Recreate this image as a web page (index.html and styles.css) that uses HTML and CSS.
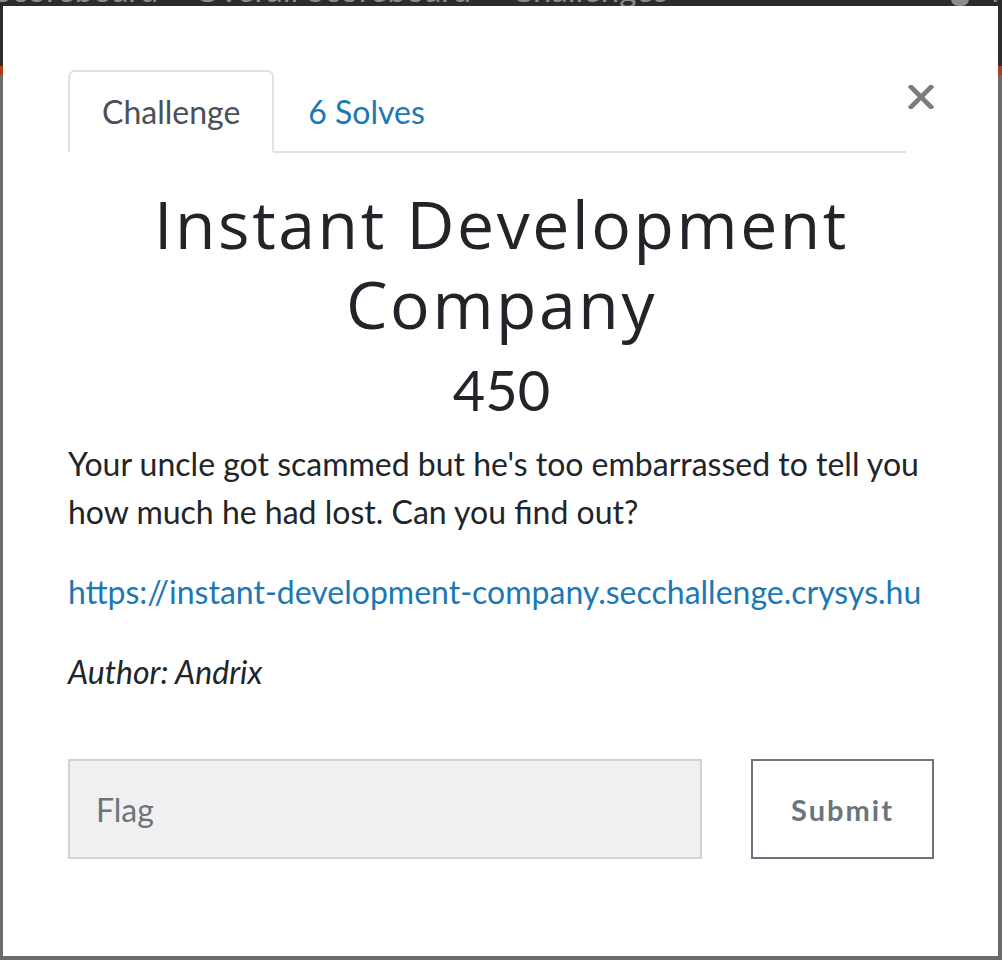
FILE: index.html
```html
<!DOCTYPE html>
<html lang="en">
<head>
<meta charset="utf-8">
<title>Instant Development Company</title>
<link rel="stylesheet" href="styles.css">
</head>
<body>
<div class="backdrop">
  <nav class="navbar">
    <span class="nav-item">Scoreboard</span>
    <span class="nav-item">Overall Scoreboard</span>
    <span class="nav-item">Challenges</span>
    <span class="nav-icon"></span>
    <span class="nav-user">N</span>
  </nav>
  <div class="navbar-stripe"></div>
  <div class="page-shade"></div>
</div>

<div class="modal">
  <div class="modal-body">
    <div class="tab-row">
      <ul class="nav-tabs">
        <li class="tab active">Challenge</li>
        <li class="tab"><a href="#" class="tab-link">6 Solves</a></li>
      </ul>
      <button class="close" aria-label="Close">
        <svg width="26" height="24" viewBox="0 0 26 24"><path d="M3 2 L23 22 M23 2 L3 22" stroke="#7b7b7b" stroke-width="4.6" stroke-linecap="square"/></svg>
      </button>
    </div>

    <h2 class="challenge-name">Instant Development Company</h2>
    <h3 class="challenge-value">450</h3>

    <div class="challenge-desc">
      <p>Your uncle got scammed but he's too embarrassed to tell you how much he had lost. Can you find out?</p>
      <p><a href="#" class="desc-link">https://instant-development-company.secchallenge.crysys.hu</a></p>
      <p><em>Author: Andrix</em></p>
    </div>

    <div class="submit-row">
      <input class="flag-input" type="text" placeholder="Flag">
      <button class="submit-btn">Submit</button>
    </div>
  </div>
</div>
</body>
</html>
```

FILE: styles.css
```css
html, body {
  margin: 0;
  padding: 0;
  height: 960px;
  overflow: hidden;
}

body {
  font-family: "Lato", "Liberation Sans", sans-serif;
  color: #212529;
  background: #6b6b6b;
}

.backdrop {
  display: flex;
  flex-direction: column;
  height: 960px;
}

.navbar {
  height: 66px;
  background: #2c2c2c;
  display: flex;
  align-items: flex-start;
  overflow: hidden;
}

.nav-item,
.nav-user {
  color: #8c8c8c;
  font-size: 33px;
  line-height: 33px;
  margin-top: -27px;
}

.nav-item:first-child { margin-left: -6px; margin-right: 36px; }
.nav-item:nth-child(2) { margin-right: 40px; }

.nav-icon {
  margin-left: auto;
  width: 18px;
  height: 14px;
  margin-top: -8px;
  border-radius: 8px;
  background: #8c8c8c;
}

.nav-user { margin-left: 22px; margin-right: -14px; }

.navbar-stripe {
  height: 9px;
  background: #a8401a;
}

.page-shade {
  flex: 1;
  background: #6b6b6b;
}

.modal {
  position: absolute;
  top: 6px;
  left: 3px;
  width: 995px;
  height: 950px;
  background: #fff;
  box-sizing: border-box;
}

.modal-body {
  padding: 64px 63px 0 65px;
}

.tab-row {
  display: flex;
  align-items: flex-start;
}

.nav-tabs {
  flex: 0 0 838px;
  display: flex;
  list-style: none;
  margin: 0;
  padding: 0;
  border-bottom: 2px solid #dee2e6;
  height: 83px;
  box-sizing: border-box;
}

.tab {
  font-size: 32px;
  line-height: 83px;
  padding: 0 34px;
  box-sizing: border-box;
  height: 83px;
  margin-bottom: -2px;
}

.tab.active {
  color: #495057;
  border: 2px solid #dee2e6;
  border-bottom-color: #fff;
  border-radius: 7px 7px 0 0;
  line-height: 79px;
  padding: 0 32px;
}

.tab-link {
  color: #1c78b4;
  text-decoration: none;
}

.close {
  border: 0;
  background: none;
  padding: 0;
  margin: 15px 0 0 2px;
  cursor: pointer;
  line-height: 0;
}

.challenge-name {
  font-family: "Open Sans", "Lato", sans-serif;
  font-weight: 400;
  font-size: 66px;
  line-height: 80px;
  letter-spacing: 2.6px;
  text-align: center;
  margin: 30px 0 0;
  color: #212529;
}

.challenge-value {
  font-family: "Lato", sans-serif;
  font-weight: 400;
  font-size: 56px;
  line-height: 62px;
  text-align: center;
  margin: 16px 0 0;
  color: #212529;
}

.challenge-desc {
  font-size: 32px;
  line-height: 48px;
  margin-top: 19px;
}

.challenge-desc p {
  margin: 0 0 32px;
}

.desc-link {
  color: #1c78b4;
  text-decoration: none;
}

.submit-row {
  display: flex;
  gap: 49px;
  margin-top: 63px;
}

.flag-input {
  width: 634px;
  height: 100px;
  box-sizing: border-box;
  background: #f0f0f0;
  border: 2px solid #ccd3da;
  padding: 0 26px;
  font-family: "Lato", sans-serif;
  font-size: 32px;
  color: #495057;
  outline: none;
}

.flag-input::placeholder {
  color: #6c757d;
}

.submit-btn {
  width: 183px;
  height: 100px;
  box-sizing: border-box;
  background: #fff;
  border: 2px solid #6c757d;
  font-family: "Lato", sans-serif;
  font-weight: 700;
  font-size: 29px;
  letter-spacing: 2px;
  color: #6c757d;
}
```
